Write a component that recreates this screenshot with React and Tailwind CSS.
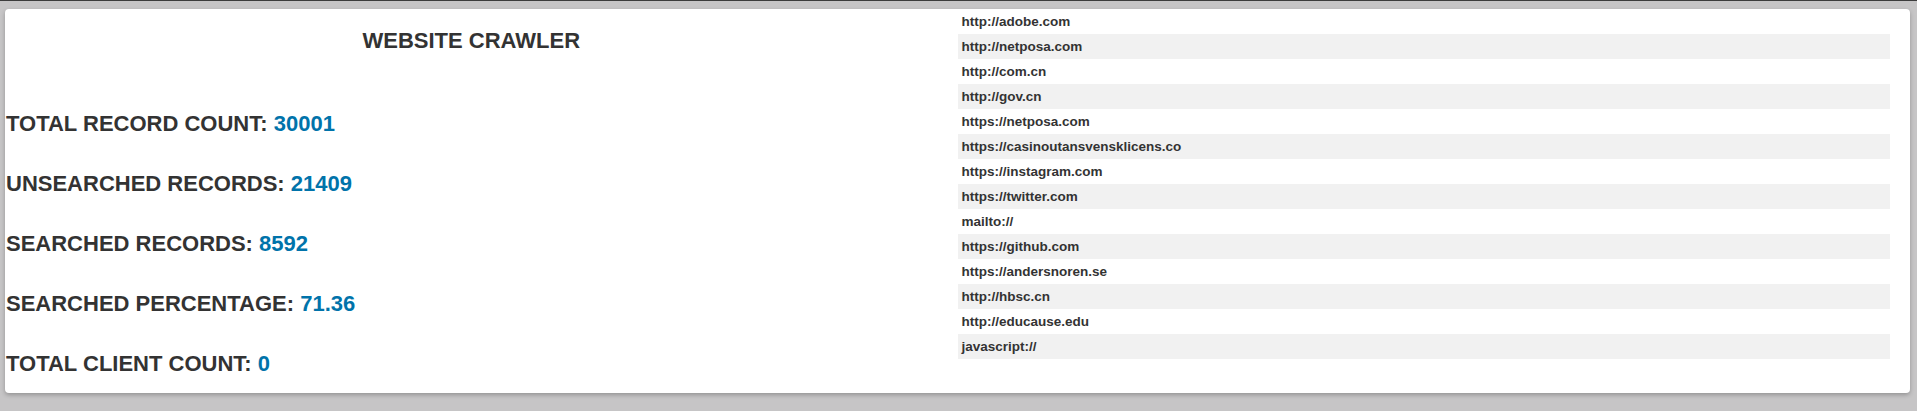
import React from 'react';

const stats = [
  { label: 'TOTAL RECORD COUNT:', value: '30001' },
  { label: 'UNSEARCHED RECORDS:', value: '21409' },
  { label: 'SEARCHED RECORDS:', value: '8592' },
  { label: 'SEARCHED PERCENTAGE:', value: '71.36' },
  { label: 'TOTAL CLIENT COUNT:', value: '0' },
];

const links = [
  'http://adobe.com',
  'http://netposa.com',
  'http://com.cn',
  'http://gov.cn',
  'https://netposa.com',
  'https://casinoutansvensklicens.co',
  'https://instagram.com',
  'https://twitter.com',
  'mailto://',
  'https://github.com',
  'https://andersnoren.se',
  'http://hbsc.cn',
  'http://educause.edu',
  'javascript://',
];

export default function App() {
  return (
    <div className="min-h-[411px] bg-[#c6c5c6] border-t border-[#3c3c3c] pt-[8px] pl-[5px] pr-[7px] font-['Liberation_Sans',Arial,sans-serif]">
      <div className="flex h-[384px] bg-white rounded-[4px] shadow-[0_2px_4px_rgba(0,0,0,0.25)] text-[#333]">
        {/* Stats */}
        <div className="w-1/2 pr-5 pt-[19px] font-bold text-[22px] leading-[25px]">
          <h1 className="text-center">WEBSITE CRAWLER</h1>
          <div className="mt-[58px] flex flex-col gap-[35px]">
            {stats.map((s) => (
              <div key={s.label} className="pl-px">
                {s.label} <span className="text-[#0073aa]">{s.value}</span>
              </div>
            ))}
          </div>
        </div>

        {/* Links */}
        <div className="w-1/2 pr-5 font-bold text-[13.5px] leading-[25px]">
          {links.map((link, i) => (
            <div key={link} className={`pl-1 ${i % 2 === 1 ? 'bg-[#f1f1f1]' : ''}`}>
              {link}
            </div>
          ))}
        </div>
      </div>
    </div>
  );
}
